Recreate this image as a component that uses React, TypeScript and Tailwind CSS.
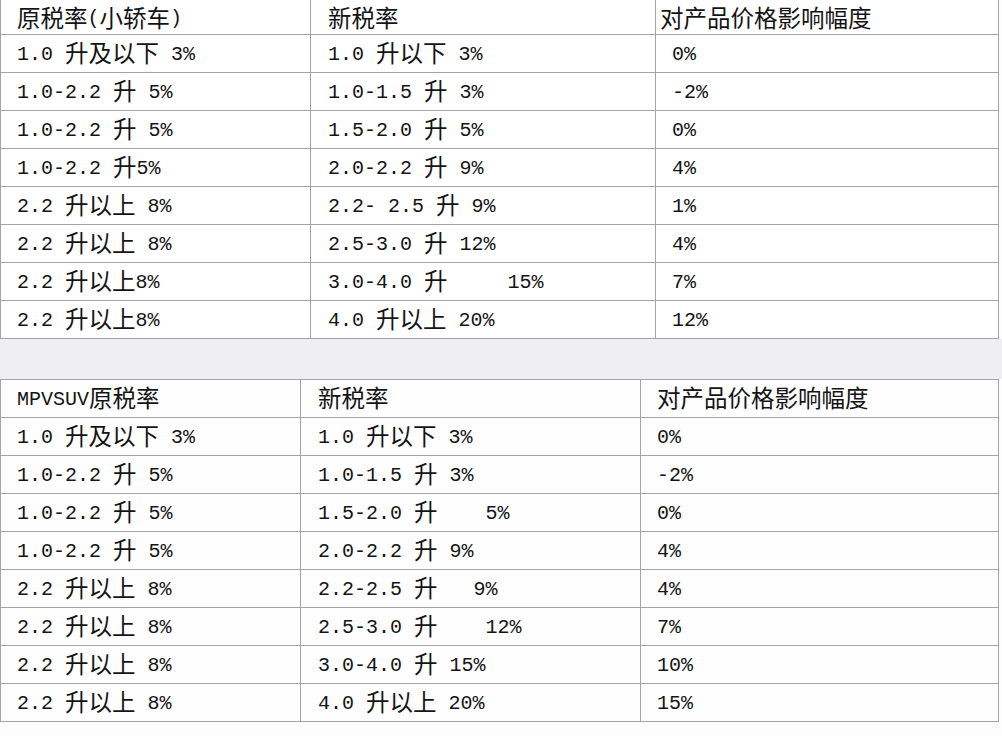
import React from "react";

const CJK = /([\u3400-\u9fff\uff08\uff09]+)/;

function T({ s }: { s: string }) {
  const parts = s.split(CJK);
  return (
    <span className="inline-flex items-center whitespace-pre">
      {parts.map((p, i) =>
        i % 2 === 1 ? (
          <span key={i} className="font-['Noto_Sans_CJK_SC',sans-serif] text-[23.5px] leading-[24px] pb-[3px]">
            {p}
          </span>
        ) : (
          <span key={i} className="leading-[20px] pt-[2px]">{p}</span>
        )
      )}
    </span>
  );
}

type Row = [string, string, string];

const t1Head: Row = ["原税率(小轿车)", "新税率", "对产品价格影响幅度"];
const t1: Row[] = [
  ["1.0 升及以下 3%", "1.0 升以下 3%", "0%"],
  ["1.0-2.2 升 5%", "1.0-1.5 升 3%", "-2%"],
  ["1.0-2.2 升 5%", "1.5-2.0 升 5%", "0%"],
  ["1.0-2.2 升5%", "2.0-2.2 升 9%", "4%"],
  ["2.2 升以上 8%", "2.2- 2.5 升 9%", "1%"],
  ["2.2 升以上 8%", "2.5-3.0 升 12%", "4%"],
  ["2.2 升以上8%", "3.0-4.0 升     15%", "7%"],
  ["2.2 升以上8%", "4.0 升以上 20%", "12%"],
];

const t2Head: Row = ["MPVSUV原税率", "新税率", "对产品价格影响幅度"];
const t2: Row[] = [
  ["1.0 升及以下 3%", "1.0 升以下 3%", "0%"],
  ["1.0-2.2 升 5%", "1.0-1.5 升 3%", "-2%"],
  ["1.0-2.2 升 5%", "1.5-2.0 升    5%", "0%"],
  ["1.0-2.2 升 5%", "2.0-2.2 升 9%", "4%"],
  ["2.2 升以上 8%", "2.2-2.5 升   9%", "4%"],
  ["2.2 升以上 8%", "2.5-3.0 升    12%", "7%"],
  ["2.2 升以上 8%", "3.0-4.0 升 15%", "10%"],
  ["2.2 升以上 8%", "4.0 升以上 20%", "15%"],
];

export default function App() {
  return (
    <div className="w-[1002px] h-[736px] overflow-hidden bg-[#fdfdfd] text-[#141414] font-['Liberation_Mono','Noto_Sans_CJK_SC',monospace] text-[20px]">
      {/* Table 1 */}
      <div className="w-[999px] border-l border-r border-[#a4a4a4] bg-white">
        <div className="flex h-[35px] border-b border-[#a4a4a4]">
          <div className="w-[310px] shrink-0 border-r border-[#a4a4a4] pl-[16px] pt-[2px] flex items-center"><T s={t1Head[0]} /></div>
          <div className="w-[345px] shrink-0 border-r border-[#a4a4a4] pl-[17px] pt-[2px] flex items-center"><T s={t1Head[1]} /></div>
          <div className="flex-1 pl-[4px] pt-[2px] flex items-center"><T s={t1Head[2]} /></div>
        </div>
        {t1.map((r, i) => (
          <div key={i} className="flex h-[38px] border-b border-[#a4a4a4]">
            <div className="w-[310px] shrink-0 border-r border-[#a4a4a4] pl-[16px] flex items-center"><T s={r[0]} /></div>
            <div className="w-[345px] shrink-0 border-r border-[#a4a4a4] pl-[17px] flex items-center"><T s={r[1]} /></div>
            <div className="flex-1 pl-[16px] flex items-center"><T s={r[2]} /></div>
          </div>
        ))}
      </div>

      {/* Gap */}
      <div className="h-[40px] bg-[#eeeef3]" />

      {/* Table 2 */}
      <div className="w-[999px] border-l border-r border-t border-[#a4a4a4] bg-[#fefefe]">
        <div className="flex h-[38px] border-b border-[#a4a4a4]">
          <div className="w-[300px] shrink-0 border-r border-[#a4a4a4] pl-[16px] flex items-center"><T s={t2Head[0]} /></div>
          <div className="w-[340px] shrink-0 border-r border-[#a4a4a4] pl-[17px] flex items-center"><T s={t2Head[1]} /></div>
          <div className="flex-1 pl-[16px] flex items-center"><T s={t2Head[2]} /></div>
        </div>
        {t2.map((r, i) => (
          <div key={i} className="flex h-[38px] border-b border-[#a4a4a4]">
            <div className="w-[300px] shrink-0 border-r border-[#a4a4a4] pl-[16px] flex items-center"><T s={r[0]} /></div>
            <div className="w-[340px] shrink-0 border-r border-[#a4a4a4] pl-[17px] flex items-center"><T s={r[1]} /></div>
            <div className="flex-1 pl-[16px] flex items-center"><T s={r[2]} /></div>
          </div>
        ))}
      </div>
    </div>
  );
}
